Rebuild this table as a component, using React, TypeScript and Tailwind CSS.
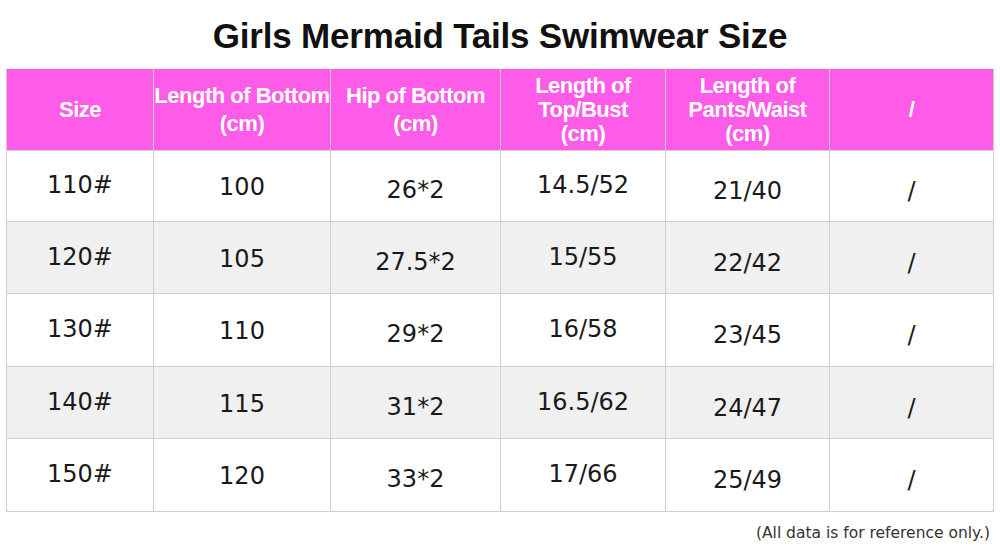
const headers = [
  { lines: ["Size"], leading: "leading-[28px]" },
  { lines: ["Length of Bottom", "(cm)"], leading: "leading-[28px]" },
  { lines: ["Hip of Bottom", "(cm)"], leading: "leading-[28px]" },
  { lines: ["Length of", "Top/Bust", "(cm)"], leading: "leading-[24px]" },
  { lines: ["Length of", "Pants/Waist", "(cm)"], leading: "leading-[24px]" },
  { lines: ["/"], leading: "leading-[28px]" },
];

const rows = [
  ["110#", "100", "26*2", "14.5/52", "21/40", "/"],
  ["120#", "105", "27.5*2", "15/55", "22/42", "/"],
  ["130#", "110", "29*2", "16/58", "23/45", "/"],
  ["140#", "115", "31*2", "16.5/62", "24/47", "/"],
  ["150#", "120", "33*2", "17/66", "25/49", "/"],
];

const rowHeights = ["h-[71px]", "h-[72px]", "h-[73px]", "h-[72px]", "h-[73px]"];

// small per-column nudges, the source image isn't perfectly centred
const cellPad = ["pb-[2px]", "pt-[2px]", "pt-[8px]", "pb-[2px]", "pt-[10px]", "pt-[10px]"];

export default function App() {
  return (
    <div className="w-[1000px] h-[550px] bg-white">
      <h1 className="h-[69px] pt-[18px] text-center font-['Liberation_Sans',Arial,sans-serif] text-[35px] leading-[35px] font-bold tracking-[-0.2px] text-[#111]">
        Girls Mermaid Tails Swimwear Size
      </h1>

      <div className="ml-[6px] w-[987px] grid grid-cols-[147px_177px_170px_165px_164px_164px] border-l border-[#cfcfcf]">
        {headers.map((h, i) => (
          <div
            key={i}
            className={`h-[82px] bg-[#ff5be9] border-b border-r border-[#cfcfcf] flex flex-col items-center justify-center font-['Liberation_Sans',Arial,sans-serif] text-white font-bold text-[22px] tracking-[-0.5px] ${h.leading}`}
          >
            {h.lines.map((l) => (
              <span key={l} className="whitespace-nowrap">{l}</span>
            ))}
          </div>
        ))}

        {rows.map((r, ri) =>
          r.map((c, ci) => (
            <div
              key={ri + "-" + ci}
              className={`${rowHeights[ri]} ${ri % 2 === 1 ? "bg-[#f0f0f0]" : "bg-white"} border-b border-r border-[#cfcfcf] flex items-center justify-center font-['DejaVu_Sans',sans-serif] text-[24px] text-[#1a1a1a] ${cellPad[ci]}`}
            >
              {c}
            </div>
          ))
        )}
      </div>

      <p className="pt-[12px] pr-[10px] text-right font-['DejaVu_Sans',sans-serif] text-[15.5px] leading-[18px] text-[#333]">
        (All data is for reference only.)
      </p>
    </div>
  );
}
